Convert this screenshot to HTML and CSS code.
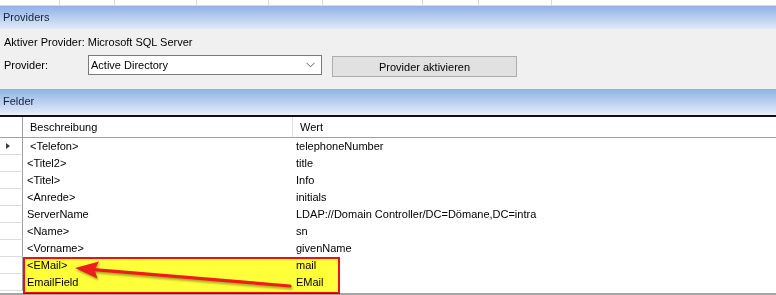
FILE: index.html
```html
<!DOCTYPE html>
<html lang="de">
<head>
    <meta charset="UTF-8">
    <title>Providers</title>
    <link rel="stylesheet" href="styles.css">
</head>
<body>
    <div class="tabstrip">
        <span style="width:60px"></span>
        <span style="width:55px"></span>
        <span style="width:82px"></span>
        <span style="width:72px"></span>
        <span class="current" style="width:54px"></span>
        <span style="width:100px"></span>
        <span style="width:56px"></span>
        <span style="width:73px"></span>
    </div>

    <div class="band">Providers</div>

    <div class="panel">
        <div class="active-line">Aktiver Provider: Microsoft SQL Server</div>
        <div class="provider-row">
            <label class="provider-label">Provider:</label>
            <div class="combo">
                <span>Active Directory</span>
                <svg class="chevron" width="9" height="6" viewBox="0 0 9 6">
                    <path d="M0.5 0.8 L4.5 4.8 L8.5 0.8" fill="none" stroke="#606060" stroke-width="1"/>
                </svg>
            </div>
            <button class="activate">Provider aktivieren</button>
        </div>
    </div>

    <div class="band band-felder">Felder</div>

    <div class="grid">
        <div class="row head">
            <div class="rh"></div>
            <div class="cell c1">Beschreibung</div>
            <div class="cell c2">Wert</div>
        </div>
        <div class="row">
            <div class="rh"><span class="current-row"></span></div>
            <div class="cell c1">&nbsp;&lt;Telefon&gt;</div>
            <div class="cell c2">telephoneNumber</div>
        </div>
        <div class="row">
            <div class="rh"></div>
            <div class="cell c1">&lt;Titel2&gt;</div>
            <div class="cell c2">title</div>
        </div>
        <div class="row">
            <div class="rh"></div>
            <div class="cell c1">&lt;Titel&gt;</div>
            <div class="cell c2">Info</div>
        </div>
        <div class="row">
            <div class="rh"></div>
            <div class="cell c1">&lt;Anrede&gt;</div>
            <div class="cell c2">initials</div>
        </div>
        <div class="row">
            <div class="rh"></div>
            <div class="cell c1">ServerName</div>
            <div class="cell c2">LDAP://Domain Controller/DC=Dömane,DC=intra</div>
        </div>
        <div class="row">
            <div class="rh"></div>
            <div class="cell c1">&lt;Name&gt;</div>
            <div class="cell c2">sn</div>
        </div>
        <div class="row">
            <div class="rh"></div>
            <div class="cell c1">&lt;Vorname&gt;</div>
            <div class="cell c2">givenName</div>
        </div>
        <div class="row">
            <div class="rh"></div>
            <div class="cell c1">&lt;EMail&gt;</div>
            <div class="cell c2">mail</div>
        </div>
        <div class="row">
            <div class="rh"></div>
            <div class="cell c1">EmailField</div>
            <div class="cell c2">EMail</div>
        </div>

        <!-- screenshot markup: highlight box and arrow -->
        <div class="marker"></div>
        <svg class="arrow" width="776" height="180" viewBox="0 0 776 180">
            <line x1="94" y1="152.6" x2="290" y2="169" stroke="#ee1c1c" stroke-width="3.2" stroke-linecap="round"/>
            <polygon points="75,151 99,144.5 94.5,152.8 97.5,161.5" fill="#ee1c1c"/>
        </svg>
    </div>

    <div class="bottom-bar"></div>
</body>
</html>
```

FILE: styles.css
```css
body {
    margin: 0;
    width: 776px;
    height: 295px;
    overflow: hidden;
    background: #f0f0f0;
    font-family: 'Liberation Sans', Arial, sans-serif;
    font-size: 11px;
    color: #000;
}

.tabstrip {
    display: flex;
    height: 5px;
    background: #fff;
    border-bottom: 1px solid #d9d9d9;
}

.tabstrip span {
    border-right: 1px solid #dadada;
    box-sizing: border-box;
}

.tabstrip .current {
    background: #fdfdfd;
}

.band {
    height: 23px;
    line-height: 23px;
    padding-left: 3px;
    background: linear-gradient(#8fb3e5, #e1eaf8);
    color: #15213a;
}

.band-felder {
    height: 26px;
    line-height: 24px;
    background: linear-gradient(#8fb3e5 0%, #dbe6f7 88%, #eef2f9 100%);
}

.panel {
    height: 60px;
    box-sizing: border-box;
    padding: 6px 0 0 4px;
}

.active-line {
    height: 14px;
    line-height: 14px;
}

.provider-row {
    display: flex;
    align-items: flex-start;
    margin-top: 6px;
}

.provider-label {
    width: 84px;
    line-height: 20px;
}

.combo {
    display: flex;
    align-items: center;
    justify-content: space-between;
    width: 234px;
    height: 20px;
    box-sizing: border-box;
    padding: 0 6px 0 2px;
    background: #fff;
    border: 1px solid #7a7a7a;
}

.activate {
    width: 185px;
    height: 21px;
    margin: 1px 0 0 10px;
    padding: 0;
    background: #e1e1e1;
    border: 1px solid #adadad;
    font-family: 'Liberation Sans', Arial, sans-serif;
    font-size: 11px;
    color: #000;
}

.grid {
    position: relative;
    height: 176px;
    background: #fff;
    border-top: 2px solid #111;
}

.row {
    display: flex;
    height: 17px;
    line-height: 17px;
}

.row.head {
    height: 20px;
    line-height: 20px;
    border-bottom: 1px solid #a0a0a0;
}

.rh {
    width: 23px;
    flex: none;
    box-sizing: border-box;
    border-right: 1px solid #a0a0a0;
    border-bottom: 1px solid #dcdcdc;
    background: #fff;
    position: relative;
}

.row.head .rh {
    border-bottom: none;
}

.cell {
    white-space: nowrap;
    box-sizing: border-box;
}

.c1 {
    width: 270px;
    padding-left: 4px;
}

.c2 {
    flex: 1;
    padding-left: 3px;
}

.row.head .c1 {
    padding-left: 7px;
    border-right: 1px solid #e3e3e3;
}

.row.head .c2 {
    padding-left: 7px;
}

.current-row {
    position: absolute;
    left: 6px;
    top: 5px;
    border-left: 4px solid #3c3c3c;
    border-top: 3.5px solid transparent;
    border-bottom: 3.5px solid transparent;
}

.marker {
    position: absolute;
    left: 23px;
    top: 140px;
    width: 317px;
    height: 37px;
    box-sizing: border-box;
    border: 2px solid #ee1010;
    background: #ffff3a;
    mix-blend-mode: multiply;
}

.arrow {
    position: absolute;
    left: 0;
    top: 0;
    filter: drop-shadow(1px 2px 1px rgba(60, 60, 0, 0.45));
}

.bottom-bar {
    height: 4px;
    background: #a5a5a5;
}
```
